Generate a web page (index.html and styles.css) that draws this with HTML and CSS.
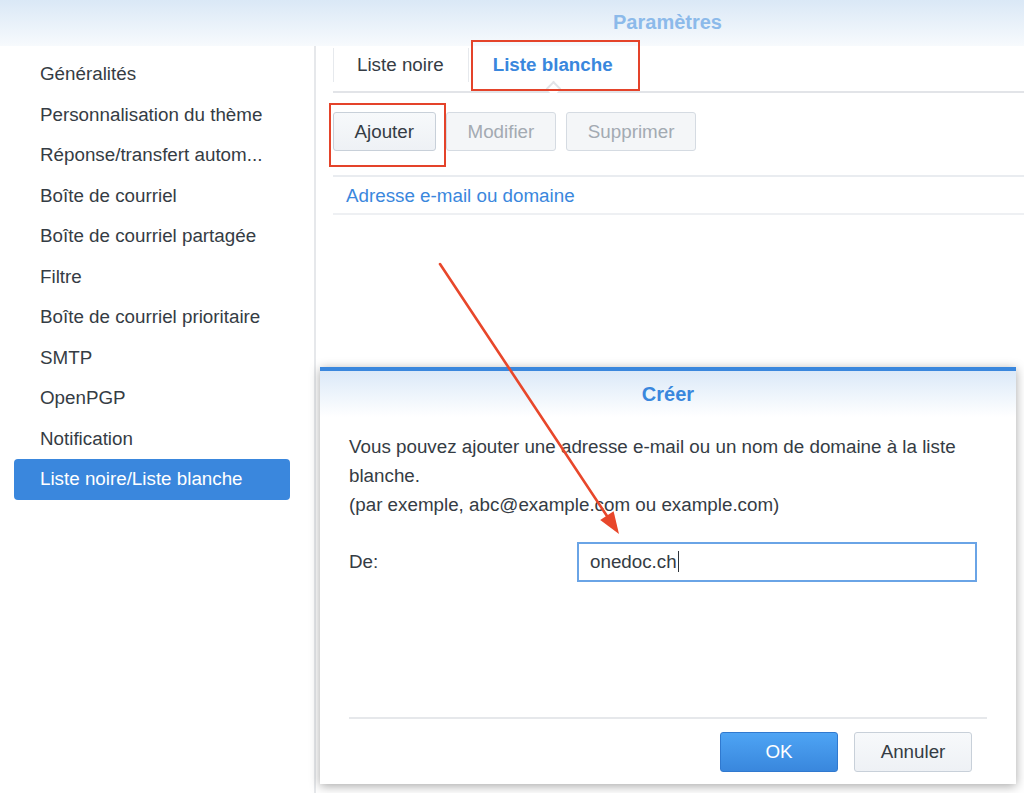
FILE: index.html
```html
<!DOCTYPE html>
<html lang="fr">
<head>
<meta charset="utf-8">
<title>Paramètres</title>
<link rel="stylesheet" href="styles.css">
</head>
<body>
<div class="app">
  <header class="titlebar">Paramètres</header>
  <div class="main">
    <nav class="sidebar">
      <div class="nav-item">Généralités</div>
      <div class="nav-item">Personnalisation du thème</div>
      <div class="nav-item">Réponse/transfert autom...</div>
      <div class="nav-item">Boîte de courriel</div>
      <div class="nav-item">Boîte de courriel partagée</div>
      <div class="nav-item">Filtre</div>
      <div class="nav-item">Boîte de courriel prioritaire</div>
      <div class="nav-item">SMTP</div>
      <div class="nav-item">OpenPGP</div>
      <div class="nav-item">Notification</div>
      <div class="nav-item active">Liste noire/Liste blanche</div>
    </nav>
    <section class="content">
      <div class="tabs">
        <div class="tab">Liste noire</div>
        <div class="tab active highlight">Liste blanche<span class="notch"></span></div>
      </div>
      <div class="toolbar">
        <button class="btn highlight-btn">Ajouter</button>
        <button class="btn disabled">Modifier</button>
        <button class="btn disabled">Supprimer</button>
      </div>
      <div class="grid-head">Adresse e-mail ou domaine</div>
    </section>
  </div>

  <div class="dialog">
    <div class="dialog-head">Créer</div>
    <div class="dialog-body">
      <p class="desc">Vous pouvez ajouter une adresse e-mail ou un nom de domaine à la liste blanche.<br>(par exemple, abc@example.com ou example.com)</p>
      <div class="form-row">
        <label class="form-label">De:</label>
        <div class="field"><span class="caret">onedoc.ch</span></div>
      </div>
    </div>
    <div class="dialog-foot">
      <button class="dbtn primary">OK</button>
      <button class="dbtn">Annuler</button>
    </div>
  </div>

  <svg class="annotation" width="1024" height="793" viewBox="0 0 1024 793">
    <line x1="440" y1="264" x2="607" y2="516" stroke="#e8472b" stroke-width="2.6" stroke-linecap="round"/>
    <polygon points="619,534 613.6,511.3 600.2,520.1" fill="#e8472b"/>
  </svg>
</div>
</body>
</html>
```

FILE: styles.css
```css
* { box-sizing: border-box; }
html, body { margin: 0; padding: 0; background: #fff; }
body {
  font-family: "Liberation Sans", Arial, Helvetica, sans-serif;
  font-size: 18.8px;
  color: #353c44;
}
.app {
  position: relative;
  width: 1024px;
  height: 793px;
  overflow: hidden;
}
.titlebar {
  height: 46px;
  padding-left: 311px;
  text-align: center;
  font-size: 20px;
  font-weight: bold;
  line-height: 44px;
  color: #8cbaea;
  background: linear-gradient(#dae8f6, #f7fafd);
}
.main {
  display: flex;
  height: 747px;
}
.sidebar {
  width: 316px;
  padding: 8px 0 0 14px;
  border-right: 2px solid #e6e8eb;
}
.nav-item {
  width: 276px;
  height: 40.55px;
  line-height: 40.5px;
  padding-left: 26px;
  white-space: nowrap;
  border-radius: 4px;
}
.nav-item.active {
  background: #3a87dd;
  color: #fff;
}
.content {
  flex: 1;
  padding-left: 17px;
}
.tabs {
  display: flex;
  align-items: flex-start;
  height: 47px;
  border-bottom: 2px solid #e2e4e8;
}
.tab {
  position: relative;
  margin-top: 2px;
  height: 34px;
  line-height: 34px;
  padding: 0 24px 0 23px;
  border-left: 1px solid #e6e9ed;
}
.tab.active {
  color: #3a87dd;
  font-weight: bold;
  padding-left: 24px;
}
.tab.highlight::after {
  content: "";
  position: absolute;
  left: 2px;
  top: -8px;
  width: 165px;
  height: 47px;
  border: 2px solid #e4432a;
}
.notch {
  position: absolute;
  left: 50%;
  bottom: -12px;
  width: 11px;
  height: 11px;
  margin-left: -5px;
  background: #fff;
  border-top: 2px solid #e2e4e8;
  border-left: 2px solid #e2e4e8;
  transform: rotate(45deg);
}
.toolbar {
  display: flex;
  gap: 10.5px;
  padding: 19px 0 24px;
}
.btn {
  position: relative;
  height: 39px;
  padding: 0 20.5px;
  font-family: inherit;
  font-size: 18.8px;
  color: #353c44;
  background: linear-gradient(#f7f9fb, #eef1f5);
  border: 1px solid #c8d0d9;
  border-radius: 3px;
}
.btn.disabled {
  color: #a3aab2;
  border-color: #d5dbe2;
  background: #f4f6f8;
}
.highlight-btn::after {
  content: "";
  position: absolute;
  left: -5px;
  top: -10px;
  width: 113px;
  height: 60px;
  border: 2px solid #e4432a;
}
.grid-head {
  height: 40px;
  line-height: 37px;
  padding-left: 13px;
  color: #3a87dd;
  border-top: 2px solid #e9ecf0;
  border-bottom: 2px solid #eef0f3;
}
.dialog {
  position: absolute;
  left: 320px;
  top: 367px;
  width: 696px;
  height: 417px;
  display: flex;
  flex-direction: column;
  background: #fff;
  border-top: 4px solid #3a87dd;
  box-shadow: 0 2px 10px rgba(0, 0, 0, 0.35);
}
.dialog-head {
  height: 46px;
  line-height: 46px;
  text-align: center;
  font-size: 20px;
  font-weight: bold;
  color: #3a87dd;
  background: linear-gradient(#dbe9f8, #ffffff);
}
.dialog-body {
  padding: 15px 29px 0;
}
.desc {
  margin: 0;
  line-height: 29px;
}
.form-row {
  display: flex;
  align-items: center;
  margin-top: 23px;
}
.form-label {
  width: 228px;
}
.field {
  width: 400px;
  height: 40px;
  line-height: 36px;
  padding-left: 11px;
  border: 2px solid #6aa4e6;
}
.caret {
  border-right: 1.5px solid #2d333a;
  padding-right: 1px;
}
.dialog-foot {
  margin: auto 29px 0;
  padding: 13px 15px 12px 0;
  border-top: 2px solid #e6e8eb;
  display: flex;
  justify-content: flex-end;
  gap: 16px;
}
.dbtn {
  width: 118px;
  height: 40px;
  font-family: inherit;
  font-size: 18.8px;
  color: #353c44;
  background: linear-gradient(#f7f9fb, #eef1f5);
  border: 1px solid #c8d0d9;
  border-radius: 3px;
}
.dbtn.primary {
  color: #fff;
  background: linear-gradient(#4ea4f4, #3987dd);
  border-color: #3079cf;
}
.annotation {
  position: absolute;
  left: 0;
  top: 0;
  pointer-events: none;
}
```
